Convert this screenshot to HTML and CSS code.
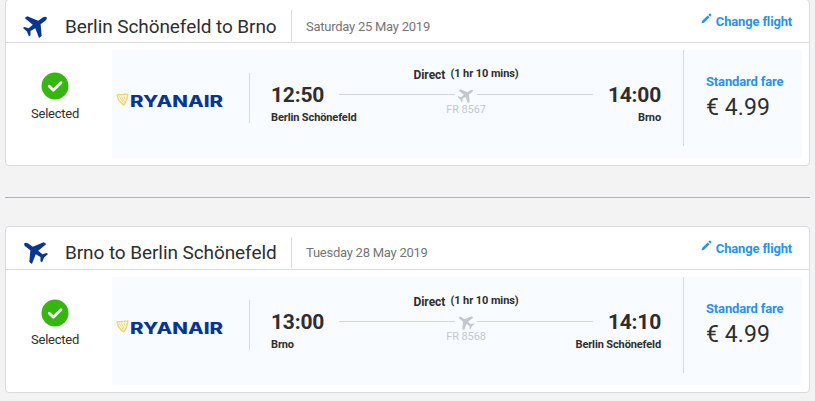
FILE: index.html
```html
<!DOCTYPE html>
<html lang="en">
<head>
    <meta charset="UTF-8">
    <meta name="viewport" content="width=device-width, initial-scale=1.0">
    <title>Selected flights</title>
    <link rel="stylesheet" href="styles.css">
</head>
<body>
    <!-- Shared icons -->
    <svg class="sprite" aria-hidden="true">
        <symbol id="plane" viewBox="0 0 24 24">
            <path transform="rotate(54 12 12)" d="M22.500 16.400v-2.800L13.800 8.400V3.500c0-1.400-.8-2.700-1.800-2.700s-1.800 1.300-1.800 2.700v4.900l-8.700 5.200v2.800l8.700-2.300.4 4.700L7.600 21v1.600l4.400-1 4.400 1V21l-3-2.200.4-4.700z"/>
        </symbol>
        <symbol id="pencil" viewBox="0 0 12 12">
            <path d="M.6 11.400l.8-2.900L7.300 2.700l2 2L3.400 10.600zM8 2L9.300.8c.3-.3.7-.3 1 0l.9.9c.3.3.3.7 0 1L10 4z"/>
        </symbol>
        <symbol id="check" viewBox="0 0 28 28">
            <circle cx="14" cy="14" r="13.500" fill="#35b610"/>
            <path d="M8.300 14.200l4 4 7.700-7.400" fill="none" stroke="#fff" stroke-width="2.800" stroke-linecap="round" stroke-linejoin="round"/>
        </symbol>
        <symbol id="harp" viewBox="0 0 12 12">
            <path d="M1 2C3 .9 4.500 2 6 1.500s3.400-.7 5-.3C10.600 4.800 9.400 8.200 7.200 11 4 9.200 1.800 6 1 2z" fill="none" stroke="#f3d35c" stroke-width="1.200"/>
            <path d="M3 3l4 6.500M5 3l2.500 5M7.300 2.600L8.500 6" fill="none" stroke="#f3d35c" stroke-width=".8"/>
        </symbol>
    </svg>

    <div class="flight">
        <div class="flight-header">
            <svg class="header-plane"><use href="#plane"/></svg>
            <h2 class="route">Berlin Schönefeld to Brno</h2>
            <span class="date">Saturday 25 May 2019</span>
            <a class="change"><svg class="pencil"><use href="#pencil"/></svg>Change flight</a>
        </div>
        <div class="flight-body">
            <div class="selected">
                <svg class="check"><use href="#check"/></svg>
                <span>Selected</span>
            </div>
            <div class="details">
                <div class="airline">
                    <svg class="harp"><use href="#harp"/></svg>
                    <svg class="wordmark" viewBox="0 0 96 20"><text x="0" y="15.500" textLength="93" lengthAdjust="spacingAndGlyphs">RYANAIR</text></svg>
                </div>
                <div class="journey">
                    <div class="stop">
                        <strong class="time">12:50</strong>
                        <span class="city">Berlin Schönefeld</span>
                    </div>
                    <div class="leg">
                        <div class="duration"><b>Direct</b> <small>(1 hr 10 mins)</small></div>
                        <div class="track"><svg class="track-plane"><use href="#plane"/></svg></div>
                        <div class="number">FR 8567</div>
                    </div>
                    <div class="stop arrival">
                        <strong class="time">14:00</strong>
                        <span class="city">Brno</span>
                    </div>
                </div>
                <div class="fare">
                    <span class="fare-name">Standard fare</span>
                    <span class="price">€ 4.99</span>
                </div>
            </div>
        </div>
    </div>

    <hr class="separator">

    <div class="flight return">
        <div class="flight-header">
            <svg class="header-plane"><use href="#plane"/></svg>
            <h2 class="route">Brno to Berlin Schönefeld</h2>
            <span class="date">Tuesday 28 May 2019</span>
            <a class="change"><svg class="pencil"><use href="#pencil"/></svg>Change flight</a>
        </div>
        <div class="flight-body">
            <div class="selected">
                <svg class="check"><use href="#check"/></svg>
                <span>Selected</span>
            </div>
            <div class="details">
                <div class="airline">
                    <svg class="harp"><use href="#harp"/></svg>
                    <svg class="wordmark" viewBox="0 0 96 20"><text x="0" y="15.500" textLength="93" lengthAdjust="spacingAndGlyphs">RYANAIR</text></svg>
                </div>
                <div class="journey">
                    <div class="stop">
                        <strong class="time">13:00</strong>
                        <span class="city">Brno</span>
                    </div>
                    <div class="leg">
                        <div class="duration"><b>Direct</b> <small>(1 hr 10 mins)</small></div>
                        <div class="track"><svg class="track-plane"><use href="#plane"/></svg></div>
                        <div class="number">FR 8568</div>
                    </div>
                    <div class="stop arrival">
                        <strong class="time">14:10</strong>
                        <span class="city">Berlin Schönefeld</span>
                    </div>
                </div>
                <div class="fare">
                    <span class="fare-name">Standard fare</span>
                    <span class="price">€ 4.99</span>
                </div>
            </div>
        </div>
    </div>
</body>
</html>
```
FILE: styles.css
```css
* {
    margin: 0;
    padding: 0;
    box-sizing: border-box;
}

body {
    height: 401px;
    padding: 0 5px;
    overflow: hidden;
    background: #f3f3f3;
    color: #2e2e2e;
    font-family: Roboto, Arial, sans-serif;
}

svg {
    display: block;
    flex: none;
}

.sprite {
    position: absolute;
    width: 0;
    height: 0;
}

.flight {
    height: 167px;
    margin-top: -1px;
    background: #fff;
    border: 1px solid #d6dae1;
    border-radius: 4px;
}

.flight.return {
    margin-top: 0;
}

.separator {
    height: 1px;
    margin: 31px 0 28px;
    border: 0;
    background: #adb0bd;
}

/* Header */
.flight-header {
    display: flex;
    height: 43px;
    padding: 0 17px 0 16px;
    border-bottom: 1px solid #d6dae1;
}

.header-plane {
    width: 28px;
    height: 28px;
    margin-top: 11px;
    fill: #073590;
}

.return .header-plane {
    margin: 10px 1px 0 -1px;
}

.return .header-plane,
.return .track-plane {
    transform: scaleX(-1);
}

.route {
    width: 226px;
    margin-left: 15px;
    padding-top: 16px;
    font-size: 19px;
    font-weight: 400;
    line-height: 22px;
    letter-spacing: -0.08px;
    white-space: nowrap;
}

.return .route {
    padding-top: 15px;
}

.date {
    height: 31px;
    margin-top: 10px;
    padding-left: 14px;
    border-left: 1px solid #d6dae1;
    color: #757575;
    font-size: 13px;
    line-height: 34px;
    letter-spacing: -0.25px;
}

.return .date {
    line-height: 32px;
}

.change {
    display: flex;
    margin-left: auto;
    color: #2b91eb;
    font-size: 13px;
    font-weight: 700;
    line-height: 44px;
    letter-spacing: -0.17px;
}

.pencil {
    width: 11px;
    height: 11px;
    margin: 13px 4px 0 0;
    fill: #2b91eb;
}

/* Body */
.flight-body {
    display: flex;
    height: 122px;
    padding: 7px 7px 7px 0;
}

.selected {
    display: flex;
    flex-direction: column;
    align-items: center;
    width: 98px;
    margin-right: 8px;
    padding-top: 22px;
    font-size: 13px;
    line-height: 28px;
    letter-spacing: -0.25px;
}

.return .selected {
    line-height: 26px;
}

.check {
    width: 28px;
    height: 28px;
}

.details {
    display: flex;
    flex: 1;
    background: #f8fbff;
    border-radius: 3px;
}

.airline {
    display: flex;
    width: 138px;
    height: 50px;
    margin-top: 23px;
    padding: 20px 0 0 4px;
    border-right: 1px solid #d6dae1;
}

.harp {
    width: 13px;
    height: 13px;
    margin-right: 1px;
}

.wordmark {
    width: 96px;
    height: 20px;
    margin-top: -2px;
    overflow: visible;
}

.wordmark text {
    fill: #073590;
    font-family: Inter, Arial, sans-serif;
    font-size: 15.5px;
    font-weight: 800;
}

.journey {
    display: flex;
    flex: 1;
    justify-content: space-between;
    padding: 0 22px 0 21px;
}

.stop {
    display: flex;
    flex-direction: column;
    width: 68px;
    padding-top: 32px;
    white-space: nowrap;
}

.arrival {
    align-items: flex-end;
}

.time {
    font-size: 21px;
    font-weight: 700;
    line-height: 26px;
    letter-spacing: -0.2px;
}

.city {
    font-size: 11px;
    font-weight: 700;
    line-height: 20px;
    letter-spacing: -0.12px;
}

.leg {
    flex: 1;
    text-align: center;
}

.duration {
    display: flex;
    justify-content: center;
    gap: 5px;
    padding-top: 16px;
    line-height: 16px;
}

.duration b {
    font-size: 12px;
    line-height: 18px;
}

.duration small {
    font-size: 11px;
    font-weight: 700;
    line-height: 16px;
    letter-spacing: -0.08px;
}

.track {
    display: flex;
    align-items: center;
    gap: 2px;
    height: 19px;
    margin-top: 1px;
}

.track::before,
.track::after {
    content: '';
    flex: 1;
    height: 1px;
    background: #d3d7dd;
}

.track-plane {
    width: 18px;
    height: 18px;
    fill: #c4c8ce;
}

.number {
    color: #c4c8ce;
    font-size: 11px;
    line-height: 12px;
    letter-spacing: -0.1px;
}

.fare {
    display: flex;
    flex-direction: column;
    width: 119px;
    height: 96px;
    padding: 22px 0 0 22px;
    border-left: 1px solid #d6dae1;
    white-space: nowrap;
}

.fare-name {
    color: #2b91eb;
    font-size: 13px;
    font-weight: 700;
    line-height: 20px;
    letter-spacing: -0.16px;
}

.price {
    font-size: 23px;
    line-height: 32px;
    letter-spacing: 0.1px;
}
```
